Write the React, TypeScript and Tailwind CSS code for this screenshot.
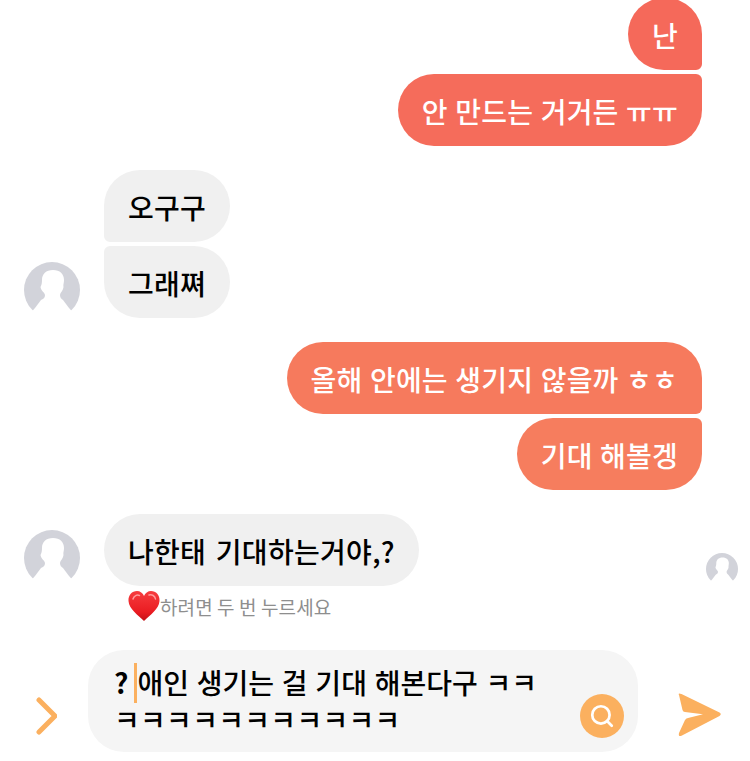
import { Search } from "lucide-react";

const font = { fontFamily: '"Noto Sans CJK KR", "Noto Sans", sans-serif' };

function Avatar({ small = false }: { small?: boolean }) {
  return (
    <svg viewBox="0 0 56 56" className={small ? "w-8 h-8" : "w-14 h-14"}>
      <circle cx="28" cy="28" r="28" fill="#d2d3da" />
      <path
        d="M29 8C36 8 40 12 40 18C40 21 39 23 39.500 25C39 29 36.500 30 36 33C36 35 37 37 39 38L45 46L56 58L0 58L11 46L17 38C20 37 21 35 21 33C20.500 30 17 29 16.500 25C17.500 23 18 21 18 18C18 12 22 8 29 8Z"
        fill="#fff"
      />
    </svg>
  );
}

function Bubble({
  text,
  className,
  spacing = "tracking-[0.2px] [word-spacing:1px]",
}: {
  text: string;
  className: string;
  spacing?: string;
}) {
  return (
    <div className={`h-[72px] flex items-center px-6 text-[28px] leading-none ${spacing} ${className}`}>
      <span className="translate-y-[1px]">{text}</span>
    </div>
  );
}

export default function App() {
  return (
    <div className="relative w-[750px] h-[761px] bg-white overflow-hidden" style={font}>
      <div className="flex flex-col items-end pr-12 -mt-[2px] gap-1 text-white font-medium">
        <Bubble text="난" className="bg-[#f5695a] rounded-l-[36px] rounded-tr-[36px] rounded-br-[6px]" />
        <Bubble text="안 만드는 거거든 ㅠㅠ" className="bg-[#f56c5b] rounded-l-[36px] rounded-br-[36px] rounded-tr-[6px]" />
      </div>

      <div className="flex items-end gap-6 pl-6 mt-6 text-black font-medium">
        <Avatar />
        <div className="flex flex-col items-start gap-1">
          <Bubble text="오구구" className="bg-[#f0f0f0] rounded-r-[36px] rounded-tl-[36px] rounded-bl-[6px]" />
          <Bubble text="그래쪄" className="bg-[#f0f0f0] rounded-r-[36px] rounded-bl-[36px] rounded-tl-[6px]" />
        </div>
      </div>

      <div className="flex flex-col items-end pr-12 mt-6 gap-1 text-white font-medium">
        <Bubble text="올해 안에는 생기지 않을까 ㅎㅎ" className="bg-[#f67a5d] rounded-l-[36px] rounded-tr-[36px] rounded-br-[6px]" />
        <Bubble text="기대 해볼겡" className="bg-[#f67d5e] rounded-l-[36px] rounded-br-[36px] rounded-tr-[6px]" />
      </div>

      <div className="flex items-end gap-6 pl-6 mt-6 text-black font-medium">
        <Avatar />
        <Bubble
          text="나한태 기대하는거야,?"
          spacing="tracking-[0.3px] [word-spacing:3px]"
          className="bg-[#f0f0f0] rounded-[36px]"
        />
      </div>

      <div className="flex items-center pl-32 mt-1 h-8">
        <svg viewBox="0 0 32 32" className="w-8 h-8 shrink-0">
          <defs>
            <linearGradient id="heart" x1="0" y1="0" x2="0" y2="1">
              <stop offset="0" stopColor="#f63c3e" />
              <stop offset="0.7" stopColor="#ea1c22" />
              <stop offset="1" stopColor="#c20f16" />
            </linearGradient>
          </defs>
          <path d="M16 31C10 25 1 19 .5 11C.2 5 4 1 9 1C12 1 15 3 16 6C17 3 20 1 23 1C28 1 32 5 31.500 11C31 19 22 25 16 31Z" fill="url(#heart)" />
          <path d="M5 9C6 5.500 9 4.500 11.500 5.500" fill="none" stroke="#ff9a9a" strokeWidth="1.500" strokeLinecap="round" />
          <path d="M21 5C24 4 27 6 27.500 9" fill="none" stroke="#ff9a9a" strokeWidth="1.500" strokeLinecap="round" />
        </svg>
        <span className="text-[19px] leading-none text-[#8e8e8e] tracking-[0.1px]">하려면 두 번 누르세요</span>
      </div>

      <div className="absolute left-[706px] top-[553px]">
        <Avatar small />
      </div>

      <div className="flex items-end mt-7 pl-[33px]">
        <svg viewBox="0 0 24 40" className="w-6 h-10 mr-[31px] mb-4 shrink-0" fill="none" stroke="#fbb05f" strokeWidth="5" strokeLinecap="round" strokeLinejoin="round">
          <path d="M6 4L22 20L6 36" />
        </svg>
        <div className="relative w-[550px] h-[102px] rounded-[36px] bg-[#f5f5f5] pl-[26px] pt-[14px] text-[28px] leading-[37px] font-medium text-black [word-spacing:1.5px]">
          <div className="flex items-center">
            <span className="font-bold">?</span>
            <span className="w-[3px] h-10 bg-[#fbb05f] ml-[6px] shrink-0 -my-[2px]" />
            <span>애인 생기는 걸 기대 해본다구 ㅋㅋ</span>
          </div>
          <div className="tracking-[0.3px]">ㅋㅋㅋㅋㅋㅋㅋㅋㅋㅋㅋ</div>
          <div className="absolute right-[14px] bottom-[14px] w-11 h-11 rounded-full bg-[#fbb05f] flex items-center justify-center text-white">
            <Search size={26} strokeWidth={2.5} />
          </div>
        </div>
        <svg viewBox="0 0 48 48" className="w-12 h-12 ml-9 mb-[13px] shrink-0">
          <path
            d="M5 4Q3.500 1.500 7.500 3L45.500 21.500Q48 23 45.500 25L8 44.500Q4 46.500 5 42L11 29Q12 27 15 26.700L29 23.200L11 21Q9 21 8.500 19Z"
            fill="#fbb05f"
          />
        </svg>
      </div>
    </div>
  );
}
